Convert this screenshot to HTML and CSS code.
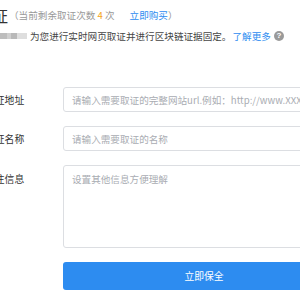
FILE: index.html
```html
<!DOCTYPE html>
<html lang="zh-CN">
<head>
<meta charset="utf-8">
<link rel="stylesheet" href="styles.css">
</head>
<body>
<div class="page">
  <div class="head">
    <span class="title">网页取证</span><span class="remain">（当前剩余取证次数 <b class="num">4</b> 次<a class="buy">立即购买</a>）</span>
  </div>
  <div class="desc">
    <span class="blur"></span><span class="desc-text">为您进行实时网页取证并进行区块链证据固定。</span><a class="more">了解更多</a><span class="qmark">?</span>
  </div>
  <div class="form">
    <div class="row">
      <label class="label">取证地址</label>
      <div class="field input"><span class="ph">请输入需要取证的完整网站url.例如：http://www.XXXX.com</span></div>
    </div>
    <div class="row">
      <label class="label">取证名称</label>
      <div class="field input"><span class="ph">请输入需要取证的名称</span></div>
    </div>
    <div class="row top">
      <label class="label">备注信息</label>
      <div class="field textarea"><span class="ph">设置其他信息方便理解</span></div>
    </div>
    <div class="row">
      <span class="label"></span>
      <button class="btn">立即保全</button>
    </div>
  </div>
</div>
</body>
</html>
```

FILE: styles.css
```css
html, body {
  margin: 0;
  padding: 0;
  background: #fff;
}
body {
  width: 300px;
  height: 300px;
  overflow: hidden;
  font-family: "Noto Sans CJK SC", "Noto Sans", sans-serif;
  color: #515a6e;
}
.page {
  margin-left: -15px;
  width: 420px;
}
.head {
  height: 30px;
  display: flex;
  align-items: center;
  white-space: nowrap;
}
.title {
  margin-left: -41px;
  font-size: 16px;
  color: #333;
  line-height: 30px;
}
.remain {
  margin-left: 1px;
  font-size: 9.6px;
  color: #999;
}
.num {
  font-weight: normal;
  color: #f5a623;
}
.buy {
  color: #2d8cf0;
  margin-left: 15px;
}
.desc {
  margin-top: -2px;
  height: 16px;
  display: flex;
  align-items: center;
  white-space: nowrap;
  font-size: 9.6px;
}
.blur {
  width: 42px;
  height: 6px;
  margin-right: 3px;
  background: linear-gradient(90deg, #e2e2e2 0 36%, #bdbdbd 36% 52%, #cfcfcf 52% 62%, #b9b9b9 62% 76%, #dedede 76% 100%);
}
.desc-text {
  color: #444;
}
.more {
  color: #2d8cf0;
  margin-left: 1px;
}
.qmark {
  margin-left: 3px;
  width: 10px;
  height: 10px;
  border-radius: 50%;
  background: #9a9a9a;
  color: #fff;
  font-size: 8px;
  font-weight: bold;
  line-height: 10px;
  text-align: center;
  font-family: "Liberation Sans", sans-serif;
}
.form {
  margin-top: 43px;
  display: flex;
  flex-direction: column;
  gap: 14px;
}
.row {
  display: flex;
  align-items: center;
}
.row.top {
  align-items: flex-start;
}
.label {
  width: 78px;
  flex: none;
  font-size: 9.8px;
  color: #333;
  white-space: nowrap;
}
.row.top .label {
  padding-top: 7px;
}
.field {
  box-sizing: border-box;
  width: 282px;
  border: 1px solid #dcdee2;
  border-radius: 3px;
  padding: 0 8px;
  font-size: 9.6px;
  white-space: nowrap;
  overflow: hidden;
}
.input {
  height: 25px;
  display: flex;
  align-items: center;
}
.textarea {
  height: 83px;
  padding-top: 6px;
}
.ph {
  color: #a9acb2;
}
.btn {
  width: 282px;
  height: 28px;
  border: none;
  border-radius: 3px;
  background: #2d8cf0;
  color: #fff;
  font-family: inherit;
  font-size: 9.8px;
  padding: 0;
}
```
